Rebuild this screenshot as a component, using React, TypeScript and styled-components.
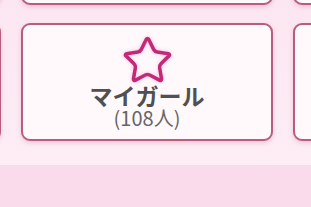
import React from 'react';
import styled, { createGlobalStyle } from 'styled-components';

const GlobalStyle = createGlobalStyle`
  html, body {
    margin: 0;
    padding: 0;
    background: #f9dbeb;
    font-family: "Noto Sans CJK JP", "Noto Sans", sans-serif;
    overflow: hidden;
  }
`;

interface Category {
  label: string;
  count?: number;
  icon?: boolean;
}

const categories: Category[] = [
  { label: '' },
  { label: '' },
  { label: '' },
  { label: '' },
  { label: 'マイガール', count: 108, icon: true },
  { label: '' },
];

const StarIcon: React.FC = () => (
  <svg width="53" height="53" viewBox="0 0 24 24" fill="none">
    <path
      d="M11.525 2.295a.53.53 0 0 1 .95 0l2.31 4.679a2.123 2.123 0 0 0 1.595 1.16l5.166.756a.53.53 0 0 1 .294.904l-3.736 3.638a2.123 2.123 0 0 0-.611 1.878l.882 5.14a.53.53 0 0 1-.771.56l-4.618-2.428a2.122 2.122 0 0 0-1.973 0L6.396 21.01a.53.53 0 0 1-.77-.56l.881-5.139a2.122 2.122 0 0 0-.611-1.879L2.16 9.795a.53.53 0 0 1 .294-.906l5.165-.755a2.122 2.122 0 0 0 1.597-1.16z"
      stroke="#c22a78"
      strokeWidth="1.6"
      strokeLinejoin="round"
    />
  </svg>
);

export default function App() {
  return (
    <>
      <GlobalStyle />
      <Panel>
        <Grid>
          {categories.map((c, i) => (
            <Card key={i}>
              {c.icon && (
                <IconWrap>
                  <StarIcon />
                </IconWrap>
              )}
              {c.label && <Label>{c.label}</Label>}
              {c.count !== undefined && <Count>({c.count}人)</Count>}
            </Card>
          ))}
        </Grid>
      </Panel>
    </>
  );
}

const Panel = styled.div`
  height: 165px;
  background: linear-gradient(180deg, #fce6f1 0%, #fdedf5 100%);
  box-shadow: 0 1px 3px rgba(190, 120, 150, 0.35);
  overflow: hidden;
`;

const Grid = styled.div`
  display: grid;
  grid-template-columns: repeat(3, 252px);
  grid-auto-rows: 118px;
  column-gap: 20px;
  row-gap: 18px;
  margin-left: -251px;
  margin-top: -113px;
`;

const Card = styled.div`
  box-sizing: border-box;
  background: #fff9fc;
  border: 2px solid #b85d80;
  border-radius: 9px;
  box-shadow: 0 2px 4px rgba(180, 90, 130, 0.25);
  display: flex;
  flex-direction: column;
  align-items: center;
  justify-content: center;
  padding-top: 1px;
`;

const IconWrap = styled.div`
  display: flex;
  filter: drop-shadow(0 0 2px rgba(230, 90, 160, 0.35));
  margin-top: -2px;
  margin-bottom: -4px;
`;

const Label = styled.div`
  font-size: 23px;
  font-weight: 700;
  color: #505050;
  line-height: 24px;
`;

const Count = styled.div`
  font-size: 20px;
  color: #666;
  line-height: 22px;
`;
